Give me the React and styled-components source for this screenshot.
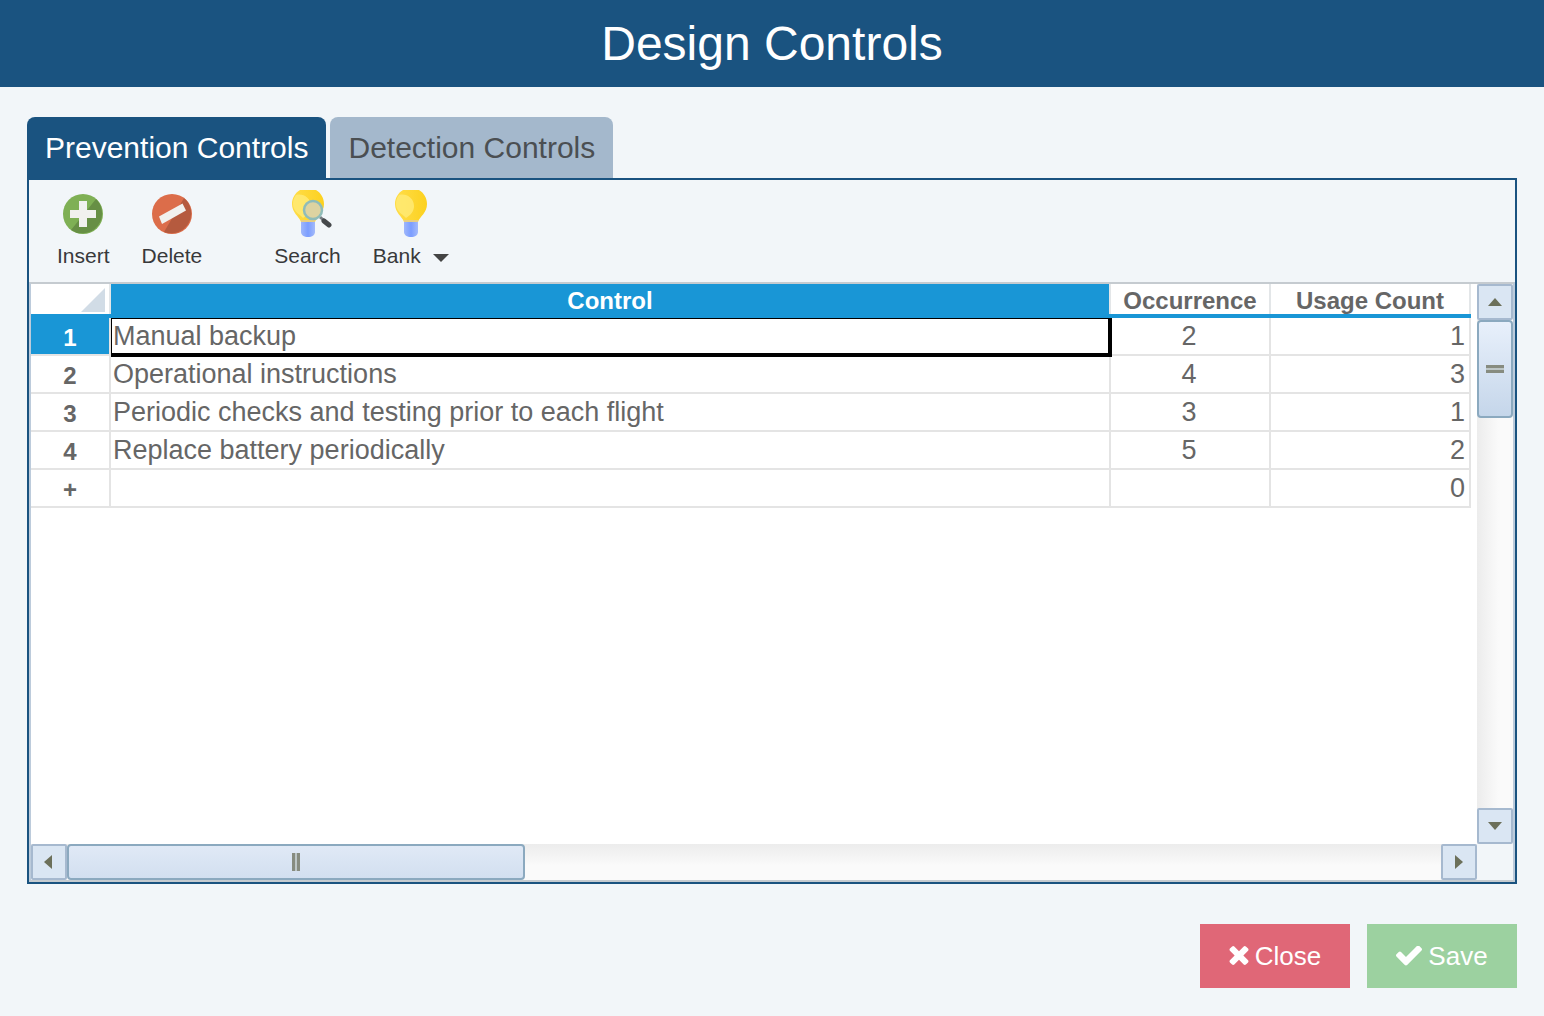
import React from "react";
import styled, { createGlobalStyle } from "styled-components";

const controls = [
  { id: "1", name: "Manual backup", occurrence: "2", usage: "1" },
  { id: "2", name: "Operational instructions", occurrence: "4", usage: "3" },
  { id: "3", name: "Periodic checks and testing prior to each flight", occurrence: "3", usage: "1" },
  { id: "4", name: "Replace battery periodically", occurrence: "5", usage: "2" },
  { id: "+", name: "", occurrence: "", usage: "0" },
];

export default function App() {
  return (
    <Page>
      <GlobalStyle />
      <Header>
        <Title>Design Controls</Title>
      </Header>
      <Main>
        <Tabs role="tablist">
          <Tab role="tab" aria-selected="true" $active>Prevention Controls</Tab>
          <Tab role="tab" aria-selected="false">Detection Controls</Tab>
        </Tabs>
        <Panel role="tabpanel">
          <Toolbar>
            <Tool>
              <InsertIcon />
              <ToolLabel>Insert</ToolLabel>
            </Tool>
            <Tool>
              <DeleteIcon />
              <ToolLabel>Delete</ToolLabel>
            </Tool>
            <ToolDivider />
            <Tool>
              <BulbIcon id="search" magnifier />
              <ToolLabel>Search</ToolLabel>
            </Tool>
            <Tool>
              <BulbIcon id="bank" />
              <ToolLabel>
                Bank
                <Caret />
              </ToolLabel>
            </Tool>
          </Toolbar>
          <Sheet>
            <Viewport>
              <Table>
                <colgroup>
                  <Col $width={80} />
                  <Col />
                  <Col $width={160} />
                  <Col $width={200} />
                </colgroup>
                <thead>
                  <tr>
                    <HeadCell as="td">
                      <Corner />
                    </HeadCell>
                    <HeadCell scope="col" $selected>Control</HeadCell>
                    <HeadCell scope="col">Occurrence</HeadCell>
                    <HeadCell scope="col">Usage Count</HeadCell>
                  </tr>
                </thead>
                <tbody>
                  {controls.map((row, index) => (
                    <tr key={row.id}>
                      <RowHead scope="row" $selected={index === 0}>{row.id}</RowHead>
                      <Cell>
                        {row.name}
                        {index === 0 && <Selection />}
                      </Cell>
                      <Cell $align="center">{row.occurrence}</Cell>
                      <Cell $align="right">{row.usage}</Cell>
                    </tr>
                  ))}
                </tbody>
              </Table>
            </Viewport>
            <Scrollbar $vertical>
              <ScrollButton aria-label="Scroll up"><Arrow points="1,12 8,4 15,12" /></ScrollButton>
              <Track $vertical>
                <Thumb $vertical><Grip $vertical /></Thumb>
              </Track>
              <ScrollButton aria-label="Scroll down"><Arrow points="1,4 15,4 8,12" /></ScrollButton>
            </Scrollbar>
            <Scrollbar>
              <ScrollButton aria-label="Scroll left"><Arrow points="11,1 11,15 3,8" /></ScrollButton>
              <Track>
                <Thumb><Grip /></Thumb>
              </Track>
              <ScrollButton aria-label="Scroll right"><Arrow points="4,1 4,15 12,8" /></ScrollButton>
            </Scrollbar>
          </Sheet>
        </Panel>
        <Footer>
          <ActionButton $color="#e06777">
            <svg width="20" height="20" viewBox="302 366 1188 1250" fill="#fff">
              <path d="M1490 1322q0 40-28 68l-136 136q-28 28-68 28t-68-28l-294-294-294 294q-28 28-68 28t-68-28l-136-136q-28-28-28-68t28-68l294-294-294-294q-28-28-28-68t28-68l136-136q28-28 68-28t68 28l294 294 294-294q28-28 68-28t68 28l136 136q28 28 28 68t-28 68l-294 294 294 294q28 28 28 68z" />
            </svg>
            Close
          </ActionButton>
          <ActionButton $color="#9cd1a0">
            <svg width="26" height="20" viewBox="121 398 1550 1124" fill="#fff">
              <path d="M1671 566q0 40-28 68l-724 724-136 136q-28 28-68 28t-68-28l-136-136-362-362q-28-28-28-68t28-68l136-136q28-28 68-28t68 28l294 295 656-657q28-28 68-28t68 28l136 136q28 28 28 68z" />
            </svg>
            Save
          </ActionButton>
        </Footer>
      </Main>
    </Page>
  );
}

function InsertIcon() {
  return (
    <svg width="48" height="48" viewBox="0 0 48 48">
      <circle cx="24" cy="24" r="20" fill="#7fb055" />
      <path d="M37 9A20 20 0 0 1 12 40z" fill="#678f45" />
      <path d="M20 11h8v9h9v8h-9v9h-8v-9h-9v-8h9z" fill="#f1f1ee" />
    </svg>
  );
}

function DeleteIcon() {
  return (
    <svg width="48" height="48" viewBox="0 0 48 48">
      <circle cx="24" cy="24" r="20" fill="#dc6d4a" />
      <path d="M36 8A20 20 0 0 1 16 42z" fill="#b55a3e" />
      <path d="M11 26.500L34.500 13.500L38 20.500L14 34z" fill="#f1f1ee" />
    </svg>
  );
}

function BulbIcon({ id, magnifier }) {
  return (
    <svg width="48" height="48" viewBox="0 0 48 48">
      <defs>
        <linearGradient id={`${id}-glass`} x1="0" x2="1">
          <stop offset="0.1" stopColor="#ffdc45" />
          <stop offset="1" stopColor="#fcd11f" />
        </linearGradient>
        <linearGradient id={`${id}-base`} x1="0" x2="1">
          <stop offset="0" stopColor="#9fb7fb" />
          <stop offset="0.5" stopColor="#7b9dff" />
          <stop offset="1" stopColor="#a3bafa" />
        </linearGradient>
      </defs>
      <path d="M16 0H32C37 3 40 8 40 14C40 23 33 26 31 32H17C15 26 8 23 8 14C8 8 11 3 16 0z" fill={`url(#${id}-glass)`} />
      <path d="M12 5C19 3 27 8 27 16C27 21 24 25 19 28C15 24 9 21 9 14C9 10 10 8 12 5z" fill="#ffea74" opacity="0.85" />
      <path d="M17 30H31V32H17z" fill="#e8cf83" />
      <path d="M17 32H31V42C31 45 28 47 24 47S17 45 17 42z" fill={`url(#${id}-base)`} />
      {magnifier && (
        <>
          <path d="M36 27L45 35" stroke="#777d82" strokeWidth="3" />
          <path d="M40 31L45 35" stroke="#45484b" strokeWidth="5" strokeLinecap="round" />
          <circle cx="29" cy="20" r="9" fill="#ddd3a1" stroke="#8fbcb9" strokeWidth="2.5" />
        </>
      )}
    </svg>
  );
}

function Caret() {
  return (
    <svg width="16" height="12" viewBox="0 0 16 12">
      <path d="M0 4H16L8 12z" fill="#444" />
    </svg>
  );
}

function Corner() {
  return (
    <CornerSvg viewBox="0 0 24 24">
      <path d="M24 0V24H0z" fill="#d1dce6" />
    </CornerSvg>
  );
}

function Arrow({ points }) {
  return (
    <svg width="16" height="16" viewBox="0 0 16 16">
      <polygon points={points} fill="#6c705a" />
    </svg>
  );
}

const GlobalStyle = createGlobalStyle`
  * {
    box-sizing: border-box;
  }
  body {
    margin: 0;
    background: #f2f6f9;
    font-family: "Liberation Sans", Arial, sans-serif;
  }
  button {
    margin: 0;
    padding: 0;
    border: 0;
    background: none;
    font-family: inherit;
    cursor: pointer;
  }
`;

const Page = styled.div`
  display: flex;
  flex-direction: column;
  min-height: 100vh;
`;

const Header = styled.header`
  display: flex;
  align-items: center;
  justify-content: center;
  height: 87px;
  background: #1a5380;
`;

const Title = styled.h1`
  margin: 0;
  color: #fff;
  font-size: 48px;
  font-weight: 400;
`;

const Main = styled.main`
  flex: 1;
  display: flex;
  flex-direction: column;
  padding: 30px 27px 28px;
`;

const Tabs = styled.div`
  display: flex;
  gap: 4px;
`;

const Tab = styled.button`
  height: 61px;
  padding: 0 18px;
  border-radius: 8px 8px 0 0;
  background: ${({ $active }) => ($active ? "#1a5380" : "#a4b8cc")};
  color: ${({ $active }) => ($active ? "#fff" : "#4b4f52")};
  font-size: 30px;
`;

const Panel = styled.section`
  flex: 1;
  display: flex;
  flex-direction: column;
  border: 2px solid #1a5380;
`;

const Toolbar = styled.div`
  display: flex;
  gap: 32px;
  padding: 10px 28px 14px;
`;

const Tool = styled.button`
  display: flex;
  flex-direction: column;
  align-items: center;
  gap: 6px;
  color: #38393b;
`;

const ToolLabel = styled.span`
  display: flex;
  align-items: center;
  gap: 12px;
  font-size: 21px;
  line-height: 24px;
`;

const ToolDivider = styled.div`
  width: 8px;
`;

const Sheet = styled.div`
  flex: 1;
  display: grid;
  grid-template-columns: 1fr 36px;
  grid-template-rows: 1fr 36px;
  border: 2px solid #c5cbd0;
  border-left-color: #bccbdb;
  border-right-color: #bccbdb;
`;

const Viewport = styled.div`
  padding-right: 6px;
  background: #fff;
`;

const Table = styled.table`
  width: 100%;
  table-layout: fixed;
  border-collapse: separate;
  border-spacing: 0;
  color: #666;
`;

const Col = styled.col`
  width: ${({ $width }) => ($width ? `${$width}px` : "auto")};
`;

const HeadCell = styled.th`
  position: relative;
  height: 34px;
  padding: 4px 2px 0 0;
  border-bottom: 4px solid #1996d6;
  background: ${({ $selected }) => ($selected ? "#1996d6" : "#fff")};
  color: ${({ $selected }) => ($selected ? "#fff" : "#666")};
  font-size: 24px;
  line-height: 26px;

  &::after {
    content: "";
    position: absolute;
    top: 0;
    right: 0;
    bottom: 0;
    width: 2px;
    background: #e3e6e8;
  }
`;

const CornerSvg = styled.svg`
  display: block;
  width: 24px;
  height: 24px;
  margin: 0 4px 2px auto;
`;

const RowHead = styled.th`
  height: 38px;
  padding: 3px 0 0;
  border-right: 2px solid #e4e4e4;
  border-bottom: 2px solid #e4e4e4;
  background: ${({ $selected }) => ($selected ? "#1996d6" : "#fff")};
  background-clip: padding-box;
  color: ${({ $selected }) => ($selected ? "#fff" : "#666")};
  font-size: 24px;
  line-height: 32px;
`;

const Cell = styled.td`
  position: relative;
  height: 38px;
  padding: 0 4px 0 2px;
  border-right: 2px solid #e4e4e4;
  border-bottom: 2px solid #e4e4e4;
  font-size: 27px;
  line-height: 36px;
  text-align: ${({ $align }) => $align || "left"};
`;

// outline of the active cell, drawn over the grid lines
const Selection = styled.div`
  position: absolute;
  inset: 0 -3px -3px 0;
  border: solid #000;
  border-width: 1px 4px 4px 1px;
  z-index: 1;
`;

const Scrollbar = styled.div`
  display: flex;
  flex-direction: ${({ $vertical }) => ($vertical ? "column" : "row")};
  background: linear-gradient(${({ $vertical }) => ($vertical ? "to right" : "to bottom")}, #ececec, #fafafa 60%);
`;

const ScrollButton = styled.button`
  display: flex;
  flex-shrink: 0;
  align-items: center;
  justify-content: center;
  width: 36px;
  height: 36px;
  border: 2px solid #a6b9cf;
  border-radius: 2px;
  background: #dae6f3;
`;

const Track = styled.div`
  flex: 1;
  display: flex;
  flex-direction: ${({ $vertical }) => ($vertical ? "column" : "row")};
`;

const Thumb = styled.div`
  display: flex;
  align-items: center;
  justify-content: center;
  flex: 0 0 ${({ $vertical }) => ($vertical ? "20%" : "33.333%")};
  border: 2px solid #8ba9bf;
  border-radius: 4px;
  background: linear-gradient(
    to bottom,
    ${({ $vertical }) => ($vertical ? "#e8f0fb, #c5d6ea" : "#e0e9f6, #d2dff0")}
  );
`;

const Grip = styled.div`
  width: ${({ $vertical }) => ($vertical ? "18px" : "8px")};
  height: ${({ $vertical }) => ($vertical ? "8px" : "18px")};
  border: solid #878c80;
  border-width: ${({ $vertical }) => ($vertical ? "3px 0" : "0 3px")};
  background: #bdc6c6;
`;

const Footer = styled.footer`
  display: flex;
  justify-content: flex-end;
  gap: 17px;
  padding-top: 40px;
`;

const ActionButton = styled.button`
  display: flex;
  align-items: center;
  justify-content: center;
  gap: 6px;
  width: 150px;
  height: 64px;
  background: ${({ $color }) => $color};
  color: #fff;
  font-size: 26px;
`;
